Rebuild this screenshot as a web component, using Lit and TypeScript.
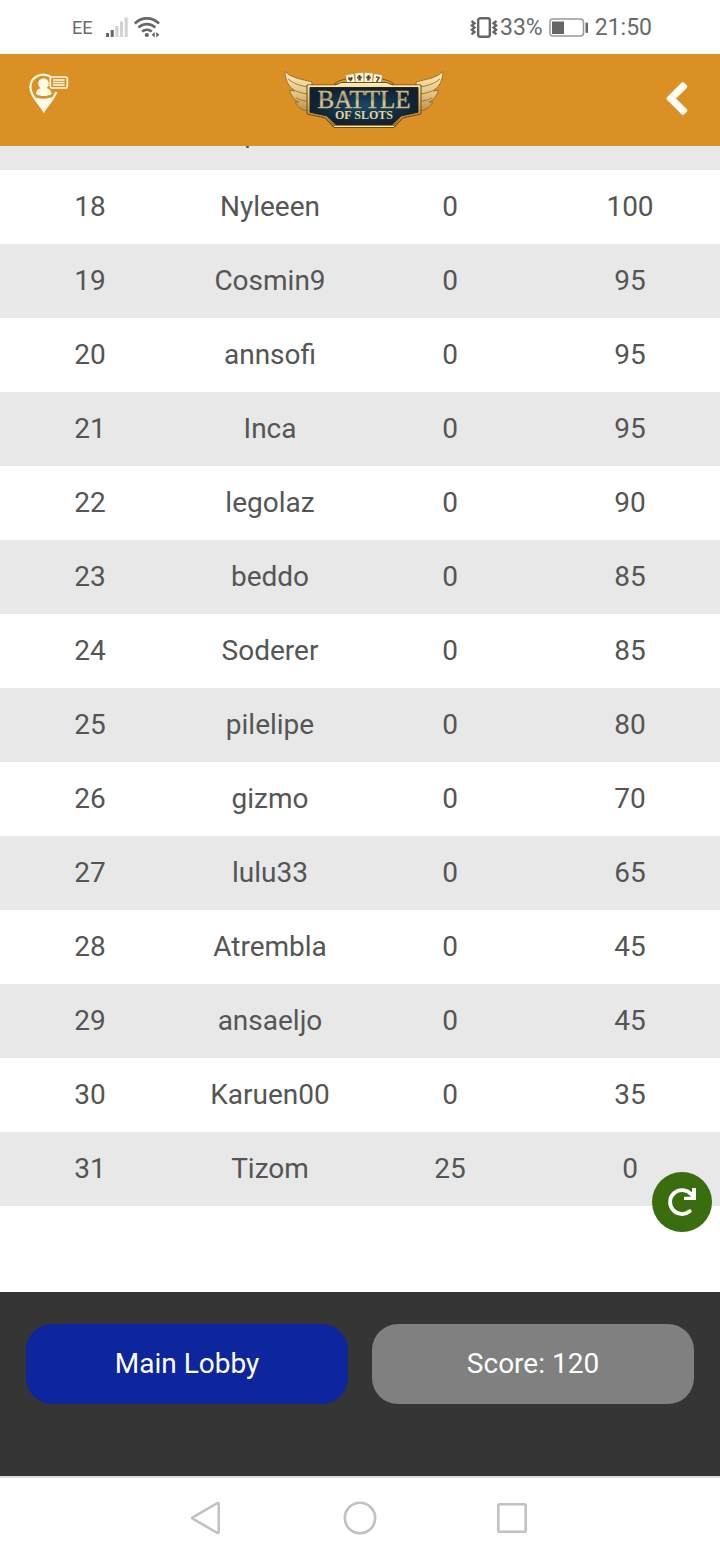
import { LitElement, html, css, svg } from "lit";
import { customElement } from "lit/decorators.js";

type Row = [rank: number, name: string, wins: number, score: number];

const ROWS: Row[] = [
  [17, "Spinne", 0, 100],
  [18, "Nyleeen", 0, 100],
  [19, "Cosmin9", 0, 95],
  [20, "annsofi", 0, 95],
  [21, "Inca", 0, 95],
  [22, "legolaz", 0, 90],
  [23, "beddo", 0, 85],
  [24, "Soderer", 0, 85],
  [25, "pilelipe", 0, 80],
  [26, "gizmo", 0, 70],
  [27, "lulu33", 0, 65],
  [28, "Atrembla", 0, 45],
  [29, "ansaeljo", 0, 45],
  [30, "Karuen00", 0, 35],
  [31, "Tizom", 25, 0],
];

@customElement("status-bar")
export class StatusBar extends LitElement {
  static styles = css`
    :host {
      display: flex;
      justify-content: space-between;
      align-items: center;
      height: 54px;
      padding: 2px 68px 0 72px;
      box-sizing: border-box;
      background: #fff;
      color: #6a6a6a;
      font-size: 23px;
      line-height: 28px;
    }
    .group {
      display: flex;
      align-items: center;
    }
    .carrier {
      font-size: 18px;
      margin-right: 14px;
    }
    .signal {
      margin-right: 6px;
    }
    .vibrate {
      margin-right: 2px;
    }
    .battery {
      margin: 0 6px;
    }
    svg {
      display: block;
    }
  `;
  render() {
    return html`
      <div class="group">
        <span class="carrier">EE</span>
        <svg class="signal" width="22" height="24" viewBox="0 1 22 24">
          <path fill="#666" d="M0 18h3v4H0zM4.700 15h3v7h-3z" />
          <path fill="#d2d2d2" d="M9.400 11h3v11h-3zM14 6.500h3V22h-3zM18.700 2.500h3V22h-3z" />
        </svg>
        <svg width="26" height="24" viewBox="0 1 26 24">
          <g fill="none" stroke="#666" stroke-width="2.600">
            <path d="M.8 8.500C7.500 1.600 18.500 1.600 25 8.500" />
            <path d="M4.500 12.600c4.600-4.700 12.200-4.700 16.800 0" />
            <path d="M8.200 16.600c2.600-2.500 7-2.500 9.600 0" />
          </g>
          <circle cx="12.800" cy="20" r="2.100" fill="#666" />
          <path fill="#666" d="M20.800 17v5.600L17.600 19.800zM22.200 17v5.600l3.200-2.800z" />
        </svg>
      </div>
      <div class="group">
        <svg class="vibrate" width="28" height="24" viewBox="0 0 28 24">
          <rect x="8.200" y="2.200" width="11.600" height="18.600" rx="2" fill="none" stroke="#666" stroke-width="2.400" />
          <path
            d="M1.500 5l3 2.200-2.600 2.200 2.600 2.200-2.600 2.200L4.500 16l-3 2.400M26.500 5l-3 2.200 2.600 2.200-2.600 2.200 2.600 2.200-2.600 2.200 3 2.400"
            fill="none"
            stroke="#666"
            stroke-width="2.400"
          />
        </svg>
        <span>33%</span>
        <svg class="battery" width="40" height="20" viewBox="0 0 40 20">
          <rect x="1" y="1" width="33.500" height="17" rx="3" fill="none" stroke="#999" stroke-width="1.500" />
          <rect x="3" y="3.500" width="12" height="12.500" fill="#666" />
          <rect x="36.500" y="4.500" width="2.500" height="10.500" rx="1" fill="#666" />
        </svg>
        <span>21:50</span>
      </div>
    `;
  }
}

const card = (x: number, y: number, angle: number, suit: string) => svg`
  <g transform="translate(${x} ${y}) rotate(${angle})">
    <rect x="-4.300" y="-4.800" width="8.600" height="10" rx="1" fill="#fbf6df" stroke="#b58a35" stroke-width=".6" />
    <path d="${suit}" fill="#5d4a25" />
  </g>`;

const HEART = "M0 2.500L-2.200 0V-1.800H-.5L0-1l.5-.8h1.700V0z";
const CLUB = "M-1-2.500h2v1.500h1.400V1H.8l.8 2h-3.200l.8-2h-1.600v-2H-1z";
const SEVEN = "M-2-2.500h4v1.300L.4 3h-1.500L.3-1H-2z";

@customElement("brand-header")
export class BrandHeader extends LitElement {
  static styles = css`
    :host {
      display: grid;
      grid-template-columns: 1fr auto 1fr;
      align-items: center;
      height: 92px;
      padding: 0 20px 0 28px;
      box-sizing: border-box;
      background: #db9026;
    }
    button {
      display: flex;
      align-items: center;
      height: 60px;
      padding: 0;
      border: 0;
      background: none;
      cursor: pointer;
    }
    .contact {
      justify-self: start;
    }
    .back {
      justify-self: end;
      padding-right: 12px;
    }
    .logo,
    svg {
      display: block;
    }
    .title {
      font-family: "Liberation Serif", serif;
    }
    .subtitle {
      font-family: "Liberation Serif", serif;
      font-weight: 700;
    }
  `;
  render() {
    return html`
      <button class="contact" aria-label="Contact">
        <svg width="42" height="54" viewBox="0 8 42 54">
          <path
            d="M23.500 12.700C20.500 9.300 14 8.800 9 11.300 3.500 14 1.300 20 3 26c2 7.300 9 13.500 12.800 20C20 39 26 34 28.200 27"
            fill="none"
            stroke="#fffbe9"
            stroke-width="2.200"
          />
          <path d="M4.500 31C9 34.500 21.500 34.500 26 31 23 36.500 18.500 41 15.600 47.500 12.500 41 7 36 4.500 31z" fill="#fffbe9" />
          <circle cx="15.500" cy="18.500" r="5.300" fill="#fffbe9" />
          <path d="M8 29c0-3.500 2.500-5.300 5-6h5c3 .7 5.500 2.500 5.500 6-4.500 2.700-11 2.700-15.500 0z" fill="#fffbe9" />
          <rect x="22.300" y="12" width="17" height="11" rx="2" fill="#db9026" stroke="#fffbe9" stroke-width="1.700" />
          <path d="M25 15h11.500M25 17.500h11.500M25 20h11.500" stroke="#fffbe9" stroke-width="1.300" />
        </svg>
      </button>
      <a class="logo" href="#" aria-label="Battle of Slots">
        <svg width="180" height="74" viewBox="0 1 180 74">
          <defs>
            <linearGradient id="gold" x1="0" y1="0" x2="0" y2="1">
              <stop offset="0" stop-color="#fbedb5" />
              <stop offset=".5" stop-color="#d6b066" />
              <stop offset="1" stop-color="#8f6a2f" />
            </linearGradient>
            <linearGradient id="feather" x1="0" y1="0" x2="0" y2="1">
              <stop offset="0" stop-color="#fdf0c0" />
              <stop offset=".6" stop-color="#e3c07c" />
              <stop offset="1" stop-color="#b98f4c" />
            </linearGradient>
            <linearGradient id="letters" x1="0" y1="0" x2="0" y2="1">
              <stop offset="0" stop-color="#f4e3b4" />
              <stop offset=".45" stop-color="#a88c5a" />
              <stop offset=".6" stop-color="#e5cf97" />
              <stop offset="1" stop-color="#c8a766" />
            </linearGradient>
            <radialGradient id="navy">
              <stop offset="0" stop-color="#174a68" />
              <stop offset="1" stop-color="#0d2133" />
            </radialGradient>
            <g id="wing">
              <path
                d="M11 9.500c8 7.500 17 7.500 27 10.500l-2 29C28 49 24 45 21 40c2 .4 3 .4 4 .2C19 37 17 33 15.500 28c2 .8 3.500 1 5 .8C14 24 11.500 18 11 9.500z"
                fill="url(#feather)"
                stroke="#8a662a"
                stroke-width=".8"
              />
              <path d="M14 17c6 5 12 6.500 20 8M18 27c5 3 9 4 16 5M22 36c4 2 7 3 11 3" fill="none" stroke="#94713a" stroke-width=".9" />
            </g>
          </defs>
          <use href="#wing" />
          <use href="#wing" transform="translate(180 0) scale(-1 1)" />
          <path d="M60 22C70 13 110 13 120 22z" fill="#c99a43" stroke="#7e5b22" />
          ${card(76.500, 17, -10, HEART)} ${card(85.500, 15.500, -3, CLUB)} ${card(94.500, 15.500, 3, CLUB)}
          ${card(103.500, 17, 10, SEVEN)}
          <path
            d="M33 23h29l6-2.500h44l6 2.500h29v29l-18 4-9 9.500H60L51 56l-18-4z"
            fill="url(#gold)"
            stroke="#6b4c1c"
            stroke-width="1"
          />
          <path d="M36 25.500h108v24.800l-17 3.600-9 8.600H62l-9-8.600-17-3.600z" fill="url(#navy)" stroke="#32250f" stroke-width="1" />
          <path d="M34 24h28l6-2.300h44l6 2.300h28M60 64.500h60" fill="none" stroke="#fff0b8" stroke-width="1.200" />
          <text
            class="title"
            x="90"
            y="46"
            text-anchor="middle"
            font-size="25"
            fill="url(#letters)"
            stroke="#c9b078"
            stroke-width=".4"
          >BATTLE</text>
          <text class="subtitle" x="90" y="57" text-anchor="middle" font-size="12" fill="#e9d39a">OF SLOTS</text>
        </svg>
      </a>
      <button class="back" aria-label="Back">
        <svg width="23" height="36" viewBox="1 0 23 36">
          <path
            d="M17.500 0.800a2 2 0 0 1 2.800 0l2.400 2.400a2 2 0 0 1 0 2.800L12 16.500 22.700 27a2 2 0 0 1 0 2.800l-2.400 2.400a2 2 0 0 1-2.800 0L3.200 17.900a2 2 0 0 1 0-2.800z"
            fill="#fffdf5"
          />
        </svg>
      </button>
    `;
  }
}

@customElement("system-nav")
export class SystemNav extends LitElement {
  static styles = css`
    :host {
      display: flex;
      justify-content: center;
      align-items: center;
      gap: 112px;
      height: 84px;
      padding-bottom: 2px;
      box-sizing: border-box;
      border-top: 2px solid #dedede;
      background: #fff;
    }
    button {
      display: block;
      padding: 0;
      border: 0;
      background: none;
    }
    svg {
      display: block;
      fill: none;
      stroke: #c2c2c2;
      stroke-width: 2.6;
      stroke-linejoin: round;
    }
  `;
  render() {
    return html`
      <button aria-label="Back">
        <svg width="40" height="40" viewBox="0 0 40 40"><path d="M4.700 19.300q-1 .7 0 1.400L29.200 34.800q1.500.7 1.500-.8V6q0-1.500-1.500-.8z" /></svg>
      </button>
      <button aria-label="Home">
        <svg width="40" height="40" viewBox="0 0 40 40"><circle cx="20" cy="20" r="15.200" /></svg>
      </button>
      <button aria-label="Recent apps">
        <svg width="40" height="40" viewBox="0 0 40 40"><rect x="6.300" y="6.300" width="27.400" height="27.400" rx="1.200" /></svg>
      </button>
    `;
  }
}

@customElement("app-root")
export class AppRoot extends LitElement {
  static styles = css`
    :host {
      display: flex;
      flex-direction: column;
      height: 100vh;
      background: #fff;
      font-family: Roboto, "Liberation Sans", sans-serif;
    }
    status-bar,
    brand-header,
    system-nav,
    .actions {
      flex: none;
    }
    .board {
      position: relative;
      flex: 1;
      min-height: 0;
      overflow: hidden;
      display: flex;
      flex-direction: column;
      justify-content: flex-end;
      padding-bottom: 86px;
    }
    table {
      width: 100%;
      table-layout: fixed;
      border-collapse: collapse;
      color: #555;
      font-size: 28px;
      line-height: 32px;
      text-align: center;
    }
    tr:nth-child(odd) {
      background: #e8e8e8;
    }
    td {
      height: 74px;
      padding: 0;
    }
    .refresh {
      position: absolute;
      right: 8px;
      bottom: 60px;
      width: 60px;
      height: 60px;
      padding: 0;
      border: 0;
      border-radius: 50%;
      background: #396d0e;
      cursor: pointer;
    }
    .refresh svg {
      display: block;
    }
    .actions {
      display: grid;
      grid-template-columns: 1fr 1fr;
      gap: 24px;
      padding: 32px 26px 72px;
      background: #353535;
    }
    .pill {
      height: 80px;
      padding: 0;
      border: 0;
      border-radius: 26px;
      background: #808080;
      color: #fff;
      font: 28px/32px Roboto, "Liberation Sans", sans-serif;
    }
    .primary {
      background: #0d269d;
    }
  `;
  render() {
    return html`
      <status-bar></status-bar>
      <brand-header></brand-header>
      <main class="board">
        <table>
          <tbody>
            ${ROWS.map((row) => html`<tr>${row.map((cell) => html`<td>${cell}</td>`)}</tr>`)}
          </tbody>
        </table>
        <button class="refresh" aria-label="Refresh">
          <svg width="60" height="60" viewBox="0 0 60 60">
            <path d="M37.700 39.300A12 12 0 1 1 39 22L41.500 25" fill="none" stroke="#fff" stroke-width="3.800" stroke-linecap="round" />
            <path d="M40 16h4v12H32v-3.300h8z" fill="#fff" />
          </svg>
        </button>
      </main>
      <div class="actions">
        <button class="pill primary">Main Lobby</button>
        <button class="pill">Score: 120</button>
      </div>
      <system-nav></system-nav>
    `;
  }
}
